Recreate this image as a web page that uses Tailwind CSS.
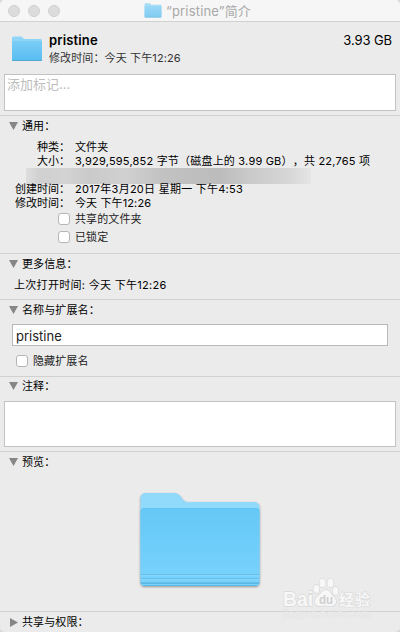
<!DOCTYPE html>
<html lang="zh-CN">
<head>
<meta charset="utf-8">
<title>“pristine”简介</title>
<script src="https://cdn.jsdelivr.net/npm/@tailwindcss/browser@4"></script>
</head>
<body class="bg-[#d9d9d9]">
<svg class="absolute w-0 h-0" aria-hidden="true">
  <defs>
    <linearGradient id="front" x1="0" y1="0" x2="0" y2="1"><stop offset="0" stop-color="#65c8f6"/><stop offset="1" stop-color="#7ad3fd"/></linearGradient>
    <linearGradient id="small" x1="0" y1="0" x2="0" y2="1"><stop offset="0" stop-color="#7bcdf5"/><stop offset="1" stop-color="#57bdf1"/></linearGradient>
    <symbol id="folder" viewBox="0 0 32 26" preserveAspectRatio="none">
      <path d="M1 2a1.500 1.500 0 0 1 1.500-1.500h8c1 0 1.500 2.500 3 2.500h16a1.500 1.500 0 0 1 1.500 1.500v19a1 1 0 0 1-1 1H2a1 1 0 0 1-1-1z" fill="#8fd5f7"/>
      <path d="M1 6a1 1 0 0 1 1-1h28a1 1 0 0 1 1 1v17.500a1.500 1.500 0 0 1-1.500 1.500h-27A1.500 1.500 0 0 1 1 23.500z" fill="url(#small)"/>
      <path d="M1.300 24.500h29.400" stroke="#4fa5cc" stroke-width=".9"/>
    </symbol>
  </defs>
</svg>
<main class="relative flex flex-col w-[400px] h-[632px] overflow-hidden rounded-t-[5px] rounded-b-[5px] bg-[#ebebeb] text-black text-[11px] leading-[14px] tracking-[.12px] whitespace-nowrap [text-spacing-trim:space-all] font-['Inter','Noto_Sans_CJK_SC',sans-serif]">
  <header class="relative h-[22px] shrink-0 bg-[#f6f6f6] border-b border-[#d1d1d1] flex items-center pl-[144px]">
    <div class="absolute left-2 top-[5px] flex gap-2">
      <i class="size-3 rounded-full bg-[#dcdcdc] border border-[#cfcfcf]"></i>
      <i class="size-3 rounded-full bg-[#dcdcdc] border border-[#cfcfcf]"></i>
      <i class="size-3 rounded-full bg-[#dcdcdc] border border-[#cfcfcf]"></i>
    </div>
    <svg class="w-[18px] h-[15px] opacity-75 mr-[4px]"><use href="#folder"/></svg>
    <h1 class="text-[13px] text-[#a8a8a8] tracking-[.18px] leading-5">“pristine”简介</h1>
  </header>

  <section class="h-[93px] shrink-0 px-1">
    <div class="flex h-[52px] pl-[7px] pr-[4px] pt-[10px]">
      <svg class="w-[32px] h-[26px] mt-[4px] mr-[6px]"><use href="#folder"/></svg>
      <div class="flex-1">
        <div class="flex justify-between text-[13px] leading-[17px]"><b class="font-semibold tracking-[.15px]">pristine</b><span class="tracking-[-.1px]">3.93 GB</span></div>
        <p class="mt-[2px] text-[#333]">修改时间：今天 下午12:26</p>
      </div>
    </div>
    <div class="h-[37px] border border-[#c3c3c3] bg-white px-[2px] text-[13px] leading-[18px] text-[#bdbdbd] tracking-normal">添加标记...</div>
  </section>

  <section class="h-[138px] shrink-0 border-t border-[#d1d1d1]">
    <h2 class="flex items-center h-[19px] pl-[9px]"><svg class="w-[9px] h-[8px] mr-[4px]"><path d="M0 0h9L4.500 8z" fill="#868686"/></svg>通用：</h2>
    <div class="grid grid-cols-[70px_1fr] gap-x-[5px] pt-[5px]">
      <span class="text-right tracking-normal">种类：</span><span>文件夹</span>
      <span class="text-right tracking-normal">大小：</span><span class="tracking-[.2px]">3,929,595,852 字节（磁盘上的 3.99 GB），共 22,765 项</span>
      <div class="col-span-2 h-[14px]"><div class="ml-[26px] w-[285px] h-[16px] bg-[linear-gradient(90deg,#dedede_0%,#d0d0d0_5%,#d3d3d3_14%,#cacaca_22%,#d0d0d0_35%,#c2c2c2_48%,#bcbcbc_68%,#c9c9c9_78%,#d6d6d6_92%,#e5e5e5_100%)]"></div></div>
      <span class="text-right relative tracking-normal">创建时间：</span><span class="relative tracking-[.25px]">2017年3月20日 星期一 下午4:53</span>
      <span class="text-right tracking-normal">修改时间：</span><span>今天 下午12:26</span>
    </div>
    <div class="flex flex-col gap-1 pl-[58px] pt-[2px] text-[#222]">
      <label class="flex items-center h-[14px] gap-[5px]"><i class="size-3 rounded-[3px] border border-[#b5b5b5] bg-white"></i>共享的文件夹</label>
      <label class="flex items-center h-[14px] gap-[5px]"><i class="size-3 rounded-[3px] border border-[#b5b5b5] bg-white"></i>已锁定</label>
    </div>
  </section>

  <section class="h-[46px] shrink-0 border-t border-[#d1d1d1]">
    <h2 class="flex items-center h-[19px] pl-[9px]"><svg class="w-[9px] h-[8px] mr-[4px]"><path d="M0 0h9L4.500 8z" fill="#868686"/></svg>更多信息：</h2>
    <p class="pl-[14px] pt-[5px] tracking-[.3px]">上次打开时间: 今天 下午12:26</p>
  </section>

  <section class="h-[77px] shrink-0 border-t border-[#d1d1d1]">
    <h2 class="flex items-center h-[19px] pl-[9px]"><svg class="w-[9px] h-[8px] mr-[4px]"><path d="M0 0h9L4.500 8z" fill="#868686"/></svg>名称与扩展名：</h2>
    <div class="mt-[5px] ml-3 w-[376px] h-[22px] border border-[#b9b9b9] bg-white px-[3px] text-[13px] leading-[23px] tracking-normal text-[#222]">pristine</div>
    <label class="flex items-center h-[14px] gap-[5px] ml-4 mt-[8px] text-[#222]"><i class="size-3 rounded-[3px] border border-[#b5b5b5] bg-white"></i>隐藏扩展名</label>
  </section>

  <section class="h-[75px] shrink-0 border-t border-[#d1d1d1]">
    <h2 class="flex items-center h-[18px] pl-[9px]"><svg class="w-[9px] h-[8px] mr-[4px]"><path d="M0 0h9L4.500 8z" fill="#868686"/></svg>注释：</h2>
    <div class="mx-1 mt-[6px] h-[46px] border border-[#c3c3c3] bg-white"></div>
  </section>

  <section class="h-[160px] shrink-0 border-t border-[#d1d1d1]">
    <h2 class="flex items-center h-[19px] pl-[9px]"><svg class="w-[9px] h-[8px] mr-[4px]"><path d="M0 0h9L4.500 8z" fill="#868686"/></svg>预览：</h2>
    <svg class="mx-auto mt-[16px] w-[128px] h-[106px] drop-shadow-[0_1px_1px_rgba(0,0,0,.35)]" viewBox="0 0 128 106">
      <path d="M4.500 11a5 5 0 0 1 5-5h29c7 0 7 9 13 9h67a5 5 0 0 1 5 5v70h-119z" fill="#91dafc"/>
      <path d="M4.500 25a4 4 0 0 1 4-4h111a4 4 0 0 1 4 4v70a4 4 0 0 1-4 4h-111a4 4 0 0 1-4-4z" fill="url(#front)"/>
      <path d="M5 24.500a4 4 0 0 1 3.500-3h111a4 4 0 0 1 3.500 3" fill="none" stroke="#60c3f0"/>
      <path d="M4.500 88.500h119M4.500 92.500h119" stroke="#86d7fb"/>
      <path d="M4.500 87.500h119M4.500 91.500h119M4.500 95.500h119" stroke="#64bfeb"/>
      <path d="M5 96.500h118M7 98.500h114" stroke="#5db8e3"/>
    </svg>
  </section>

  <section class="h-[21px] shrink-0 border-t border-[#d1d1d1]">
    <h2 class="flex items-center h-[20px] pl-[10px]"><svg class="w-[8px] h-[9px] mr-[4px]"><path d="M0 0v9L8 4.500z" fill="#868686"/></svg>共享与权限：</h2>
  </section>

  <svg class="absolute left-[280px] top-[574px] tracking-normal" width="100" height="50" fill="#f7f7f7" stroke="#d9d9d9" stroke-width="1.400" paint-order="stroke" font-family="Liberation Sans, Noto Sans CJK SC, sans-serif">
    <text x="3" y="32" font-size="20" font-weight="700" textLength="30" lengthAdjust="spacingAndGlyphs">Bai</text>
    <ellipse cx="36.500" cy="15" rx="2.800" ry="4"/><ellipse cx="42.500" cy="9" rx="3" ry="4.300"/><ellipse cx="50.500" cy="9" rx="3" ry="4.300"/><ellipse cx="55.500" cy="17" rx="2.800" ry="4"/>
    <path d="M46 16c4 0 5 4 8 7 4 4 2 10-4 9q-5-1-9 0c-6 1-8-5-4-9 4-3 5-7 9-7z"/>
    <text x="39" y="30" font-size="13" font-weight="700" fill="#cfcfcf" stroke="none" textLength="14" lengthAdjust="spacingAndGlyphs">du</text>
    <text x="59" y="31" font-size="15" font-weight="700" stroke-width="1.200" textLength="31" font-family="Noto Sans CJK SC, sans-serif">经验</text>
    <text x="3" y="43" font-size="9" stroke="#e1e1e1" stroke-width="1" fill="#f1f1f1" textLength="87">jingyan.baidu.com</text>
  </svg>
</main>
</body>
</html>
